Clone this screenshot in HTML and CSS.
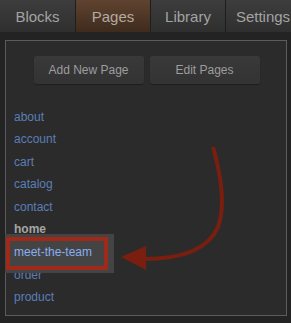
FILE: index.html
```html
<!DOCTYPE html>
<html lang="en">
<head>
    <meta charset="UTF-8">
    <meta name="viewport" content="width=device-width, initial-scale=1.0">
    <title>Pages</title>
    <link rel="stylesheet" href="styles.css">
</head>
<body>
    <div class="tabs">
        <div class="tab">Blocks</div>
        <div class="tab active">Pages</div>
        <div class="tab">Library</div>
        <div class="tab">Settings</div>
    </div>

    <div class="panel">
        <div class="button-container">
            <button>Add New Page</button>
            <button>Edit Pages</button>
        </div>
        <ul class="page-list">
            <li><a href="#">about</a></li>
            <li><a href="#">account</a></li>
            <li><a href="#">cart</a></li>
            <li><a href="#">catalog</a></li>
            <li><a href="#">contact</a></li>
            <li class="current">home</li>
            <li class="selected"><a href="#">meet-the-team</a></li>
            <li><a href="#">order</a></li>
            <li><a href="#">product</a></li>
        </ul>
    </div>

    <!-- annotation arrow -->
    <svg class="arrow" width="291" height="323" viewBox="0 0 291 323">
        <path d="M213,147 C221,175 226,205 218,227 C208,250 180,259 144,259" fill="none" stroke="#7a1f10" stroke-width="4"/>
        <polygon points="121,257 146,246 146,270" fill="#7a1f10"/>
    </svg>
</body>
</html>
```

FILE: styles.css
```css
body {
    margin: 0;
    background-color: #232323;
    font-family: 'Liberation Sans', Arial, sans-serif;
    position: relative;
    height: 323px;
    overflow: hidden;
}

.tabs {
    display: flex;
    gap: 1px;
    height: 32px;
    background-color: #1e1e1e;
}

.tab {
    flex: none;
    width: 74px;
    display: flex;
    align-items: center;
    justify-content: center;
    font-size: 15px;
    color: #a3a3a3;
    background: linear-gradient(#3d3d3d, #2f2f2f);
}

.tab:first-child {
    width: 75px;
}

.tab.active {
    color: #b3aba3;
    background: linear-gradient(#604330, #3e2b1d);
}

.panel {
    margin: 8px 4px 0 5px;
    border: 1px solid #5c5c5c;
    background-color: #2b2b2b;
    padding: 15px 0 6px 0;
}

.button-container {
    display: flex;
    justify-content: center;
    gap: 6px;
    padding-left: 1px;
}

button {
    width: 110px;
    height: 28px;
    font-family: inherit;
    font-size: 12px;
    color: #9d9d9d;
    background: linear-gradient(#393939, #333333);
    border: none;
    border-radius: 3px;
    box-shadow: 0 1px 1px rgba(0, 0, 0, 0.3);
}

.page-list {
    list-style: none;
    margin: 21.5px 0 0 0;
    padding: 0;
}

.page-list li {
    height: 22.6px;
    line-height: 22.6px;
    padding-left: 8px;
    font-size: 12px;
}

.page-list a {
    color: #5b7eb7;
    text-decoration: none;
}

.page-list .current {
    color: #a5a5a5;
    font-weight: bold;
}

.page-list .selected {
    position: relative;
}

.page-list .selected a {
    position: relative;
    z-index: 1;
    color: #88aef0;
}

.page-list .selected::before {
    content: "";
    position: absolute;
    left: -1px;
    top: -7px;
    width: 109px;
    height: 39px;
    background-color: #444444;
}

.page-list .selected::after {
    content: "";
    position: absolute;
    left: 0;
    top: -4px;
    width: 94px;
    height: 25px;
    border: 4px solid #a02a1a;
}

.arrow {
    position: absolute;
    left: 0;
    top: 0;
    pointer-events: none;
}
```
